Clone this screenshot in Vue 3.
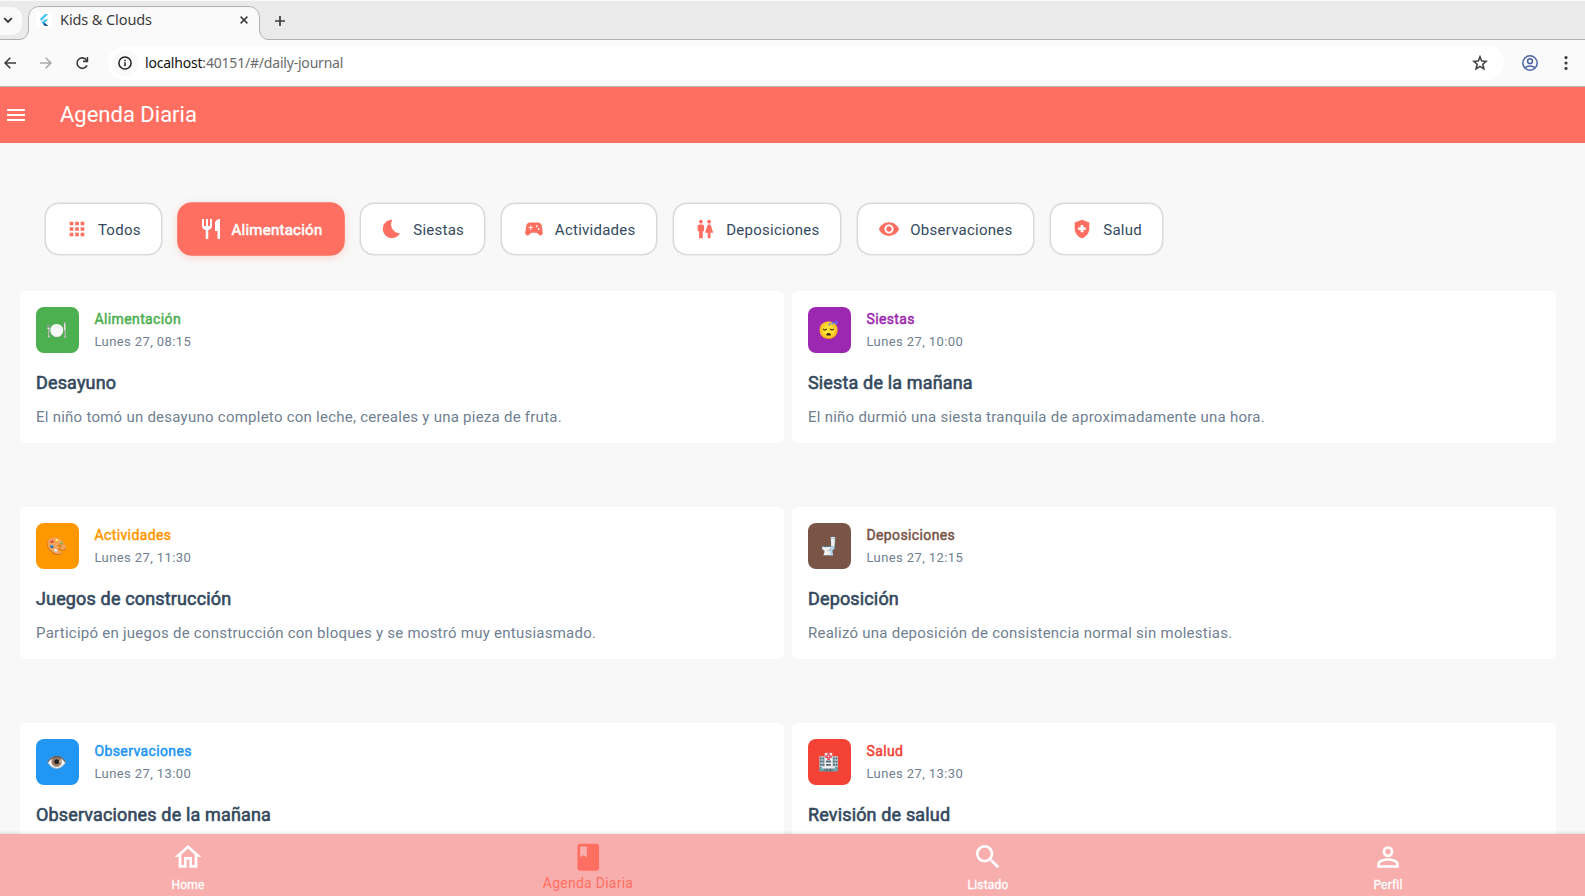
<script setup>
const chips = [
  { label: 'Todos', icon: 'M4 8h4V4H4v4zm6 12h4v-4h-4v4zm-6 0h4v-4H4v4zm0-6h4v-4H4v4zm6 0h4v-4h-4v4zm6-10v4h4V4h-4zm-6 4h4V4h-4v4zm6 6h4v-4h-4v4zm0 6h4v-4h-4v4z' },
  { label: 'Alimentación', active: true, icon: 'M11 9H9V2H7v7H5V2H3v7c0 2.12 1.66 3.84 3.75 3.97V22h2.5v-9.03C11.34 12.84 13 11.12 13 9V2h-2v7zm5-3v8h2.5v8H21V2c-2.76 0-5 2.24-5 4z' },
  { label: 'Siestas', icon: 'M12.34 2.02C6.59 1.82 2 6.42 2 12c0 5.52 4.48 10 10 10 3.71 0 6.93-2.02 8.66-5.02-7.51-.25-12.09-8.43-8.32-14.96z' },
  { label: 'Actividades', icon: 'M21.58 16.09l-1.09-7.66C20.21 6.46 18.52 5 16.53 5H7.47C5.48 5 3.79 6.46 3.51 8.43l-1.09 7.66C2.2 17.63 3.39 19 4.94 19c.68 0 1.32-.27 1.8-.75L9 16h6l2.25 2.25c.48.48 1.13.75 1.8.75 1.56 0 2.75-1.37 2.53-2.91zM11 11H9v2H8v-2H6v-1h2V8h1v2h2v1zm4-1c-.55 0-1-.45-1-1s.45-1 1-1 1 .45 1 1-.45 1-1 1zm2 3c-.55 0-1-.45-1-1s.45-1 1-1 1 .45 1 1-.45 1-1 1z' },
  { label: 'Deposiciones', icon: 'M5.5 22v-7.5H4V9c0-1.1.9-2 2-2h3c1.1 0 2 .9 2 2v5.5H9.5V22h-4zM18 22v-6h3l-2.54-7.63C18.18 7.55 17.42 7 16.56 7h-.12c-.86 0-1.63.55-1.9 1.37L12 16h3v6h3zM7.5 6c1.11 0 2-.89 2-2s-.89-2-2-2-2 .89-2 2 .89 2 2 2zm9 0c1.11 0 2-.89 2-2s-.89-2-2-2-2 .89-2 2 .89 2 2 2z' },
  { label: 'Observaciones', icon: 'M12 4.5C7 4.5 2.73 7.61 1 12c1.73 4.39 6 7.5 11 7.5s9.27-3.11 11-7.5c-1.73-4.39-6-7.5-11-7.5zM12 17c-2.76 0-5-2.24-5-5s2.24-5 5-5 5 2.24 5 5-2.24 5-5 5zm0-8c-1.66 0-3 1.34-3 3s1.34 3 3 3 3-1.34 3-3-1.34-3-3-3z' },
  { label: 'Salud', icon: 'M12 2L4 5v6.09c0 5.05 3.41 9.76 8 10.91 4.59-1.15 8-5.86 8-10.91V5l-8-3zM10.5 13H8v-3h2.5V7.5h3V10H16v3h-2.5v2.5h-3V13z' },
]

const entries = [
  { kind: 'food', emoji: '🍽️', category: 'Alimentación', date: 'Lunes 27, 08:15', title: 'Desayuno', text: 'El niño tomó un desayuno completo con leche, cereales y una pieza de fruta.' },
  { kind: 'nap', emoji: '😴', category: 'Siestas', date: 'Lunes 27, 10:00', title: 'Siesta de la mañana', text: 'El niño durmió una siesta tranquila de aproximadamente una hora.' },
  { kind: 'play', emoji: '🎨', category: 'Actividades', date: 'Lunes 27, 11:30', title: 'Juegos de construcción', text: 'Participó en juegos de construcción con bloques y se mostró muy entusiasmado.' },
  { kind: 'wc', emoji: '🚽', category: 'Deposiciones', date: 'Lunes 27, 12:15', title: 'Deposición', text: 'Realizó una deposición de consistencia normal sin molestias.' },
  { kind: 'watch', emoji: '👁️', category: 'Observaciones', date: 'Lunes 27, 13:00', title: 'Observaciones de la mañana', text: '' },
  { kind: 'health', emoji: '🏥', category: 'Salud', date: 'Lunes 27, 13:30', title: 'Revisión de salud', text: '' },
]

const tabs = [
  { label: 'Home', icon: 'M12 5.69l5 4.5V18h-2v-6H9v6H7v-7.81l5-4.5M12 3L2 12h3v8h6v-6h2v6h6v-8h3L12 3z' },
  { label: 'Agenda Diaria', active: true, icon: 'M18 2H6c-1.1 0-2 .9-2 2v16c0 1.1.9 2 2 2h12c1.1 0 2-.9 2-2V4c0-1.1-.9-2-2-2zM6 4h5v8l-2.5-1.5L6 12V4z' },
  { label: 'Listado', icon: 'M15.5 14h-.79l-.28-.27C15.41 12.59 16 11.11 16 9.5 16 5.91 13.09 3 9.5 3S3 5.91 3 9.5 5.91 16 9.5 16c1.61 0 3.09-.59 4.23-1.57l.27.28v.79l5 4.99L20.49 19l-4.99-5zm-6 0C7.01 14 5 11.99 5 9.5S7.01 5 9.5 5 14 7.01 14 9.5 11.99 14 9.5 14z' },
  { label: 'Perfil', icon: 'M12 5.9c1.16 0 2.1.94 2.1 2.1s-.94 2.1-2.1 2.1S9.9 9.16 9.9 8s.94-2.1 2.1-2.1m0 9c2.97 0 6.1 1.46 6.1 2.1v1.1H5.9V17c0-.64 3.13-2.1 6.1-2.1M12 4C9.79 4 8 5.79 8 8s1.79 4 4 4 4-1.79 4-4-1.79-4-4-4zm0 9c-2.67 0-8 1.34-8 4v3h16v-3c0-2.66-5.33-4-8-4z' },
]
</script>

<template>
  <div class="window">
    <div class="tabstrip">
      <div class="tab-search">
        <svg width="10" height="7" viewBox="0 0 10 7"><path d="M1.2 1.2 5 5l3.8-3.8" fill="none" stroke="#333" stroke-width="1.8" /></svg>
      </div>
      <svg class="tab-shape" width="252" height="35" viewBox="0 0 252 35">
        <path d="M0 34.5V33.5H1C7 33.500 10.500 29 10.500 23V12C10.500 5 15 .5 22 .5H230C237 .5 241.500 5 241.500 12V23C241.500 29 245 33.500 251 33.500H252V35H0Z" fill="#fafafa" />
        <path d="M0 33.500H1C7 33.500 10.500 29 10.500 23V12C10.500 5 15 .5 22 .5H230C237 .5 241.500 5 241.500 12V23C241.500 29 245 33.500 251 33.500H252" fill="none" stroke="#b0b0b0" />
      </svg>
      <div class="tab">
        <span class="favicon">
          <svg width="16" height="16" viewBox="0 0 16 16">
            <path d="M9 2h3.200L5.400 8.900 3.800 7.200Z" fill="#47c5fb" />
            <path d="M9 7.300h3.200L8.800 10.700 7.200 9.100Z" fill="#47c5fb" />
            <path d="M5.600 10.600 7.200 9l1.700 1.700-1.700 1.600Z" fill="#27a9e8" />
            <path d="M7.200 12.300 8.800 10.700 12.200 14H9Z" fill="#0b4f95" />
          </svg>
        </span>
        <span class="tab-title">Kids &amp; Clouds</span>
        <svg class="tab-close" width="8" height="8" viewBox="0 0 8 8"><path d="M.6.600 7.400 7.400M7.400.600.6 7.400" stroke="#3c3c3c" stroke-width="1.500" /></svg>
      </div>
      <svg class="tab-new" width="10" height="10" viewBox="0 0 10 10"><path d="M5 0V10M0 5H10" stroke="#3c3c3c" stroke-width="1.700" /></svg>
    </div>

    <div class="toolbar">
      <svg class="back" width="12" height="12" viewBox="0 0 12 12"><path d="M12 6H1.200M6.300.800 1.100 6l5.200 5.200" fill="none" stroke="#3c3c3c" stroke-width="1.600" /></svg>
      <svg class="forward" width="12" height="12" viewBox="0 0 12 12"><path d="M0 6H10.800M5.700.800 10.900 6l-5.200 5.200" fill="none" stroke="#aaa" stroke-width="1.600" /></svg>
      <svg class="reload" width="14" height="14" viewBox="0 0 14 14"><path d="M12 9.200A5.200 5.200 0 1 1 11.400 4L12.400 5.200" fill="none" stroke="#3c3c3c" stroke-width="1.600" /><path d="M12.400 1V5.400H8" fill="none" stroke="#3c3c3c" stroke-width="1.600" /></svg>
      <div class="omnibox">
        <span class="site-info">
          <svg width="14" height="14" viewBox="0 0 14 14"><circle cx="7" cy="7" r="6.100" fill="none" stroke="#222" stroke-width="1.500" /><path d="M7 6.200V10.200M7 3.700V5.200" stroke="#222" stroke-width="1.500" /></svg>
        </span>
        <span class="url"><b>localhost</b>:40151/#/daily-journal</span>
        <svg class="star" width="16" height="16" viewBox="0 0 16 16"><path d="M8 1.700 9.700 6l4.600.3-3.500 3 1.100 4.500L8 11.300l-3.900 2.500 1.100-4.500-3.500-3L6.300 6Z" fill="none" stroke="#3c3c3c" stroke-width="1.500" /></svg>
      </div>
      <svg class="account" width="16" height="16" viewBox="0 0 16 16"><g fill="none" stroke="#4a63a8" stroke-width="1.500"><circle cx="8" cy="8" r="7.200" /><circle cx="8" cy="6.200" r="2.400" /><path d="M3 12.800C5.500 10.300 10.500 10.300 13 12.800" /></g></svg>
      <svg class="kebab" width="4" height="14" viewBox="0 0 4 14"><g fill="#3c3c3c"><circle cx="2" cy="1.600" r="1.550" /><circle cx="2" cy="7" r="1.550" /><circle cx="2" cy="12.400" r="1.550" /></g></svg>
    </div>

    <header class="appbar">
      <svg width="24" height="24" viewBox="0 0 24 24"><path d="M3 18h18v-2H3v2zm0-5h18v-2H3v2zm0-7v2h18V6H3z" fill="#fff" /></svg>
      <h1>Agenda Diaria</h1>
    </header>

    <main class="content">
      <div class="chips">
        <button v-for="chip in chips" :key="chip.label" class="chip" :class="{ active: chip.active }">
          <svg viewBox="0 0 24 24"><path :d="chip.icon" fill="currentColor" fill-rule="evenodd" /></svg>
          <span>{{ chip.label }}</span>
        </button>
      </div>
      <div class="grid">
        <article v-for="entry in entries" :key="entry.title" class="card" :class="entry.kind">
          <div class="head">
            <div class="badge">{{ entry.emoji }}</div>
            <div>
              <div class="category">{{ entry.category }}</div>
              <div class="date">{{ entry.date }}</div>
            </div>
          </div>
          <h2>{{ entry.title }}</h2>
          <p>{{ entry.text }}</p>
        </article>
      </div>
    </main>

    <nav class="bottom">
      <div v-for="tab in tabs" :key="tab.label" class="item" :class="{ active: tab.active }">
        <svg viewBox="0 0 24 24"><path :d="tab.icon" fill="currentColor" fill-rule="evenodd" /></svg>
        <span>{{ tab.label }}</span>
      </div>
    </nav>
  </div>
</template>

<style>
body { margin: 0; overflow: hidden; }
</style>

<style scoped>
* { box-sizing: border-box; }
.window { width: 1585px; height: 896px; display: flex; flex-direction: column; overflow: hidden; background: #f8f8f8; font-family: Roboto, "Liberation Sans", "Noto Color Emoji", sans-serif; }
svg { display: block; flex: none; }

.tabstrip { position: relative; height: 40px; flex: none; display: flex; align-items: center; background: #eaeaea; border-top: 1px solid #fafafa; border-bottom: 1px solid #b0b0b0; }
.tab-search { width: 22px; height: 28px; margin-top: 1px; border-radius: 0 10px 10px 0; background: #fafafa; display: flex; align-items: center; padding-left: 3px; }
.tab-shape { position: absolute; left: 18px; top: 5px; }
.tab { position: relative; width: 232px; height: 28px; margin-left: 6px; display: flex; align-items: center; padding-left: 8px; }
.favicon { width: 16px; height: 16px; background: #fff; }
.tab-title { width: 180px; margin-left: 8px; padding-bottom: 2px; font: 14.5px "Noto Sans", sans-serif; color: #3c3c3c; letter-spacing: -0.1px; white-space: nowrap; }
.tab-new { margin-left: 15px; margin-top: 1px; }

.toolbar { height: 47px; flex: none; display: flex; align-items: center; background: #fafafa; border-bottom: 1px solid #b8b8b8; }
.back { margin-left: 4px; }
.forward { margin-left: 24px; }
.reload { margin-left: 23px; }
.omnibox { width: 1396px; height: 34px; margin-left: 19px; border-radius: 17px; background: #fff; display: flex; align-items: center; padding-left: 4px; }
.site-info { width: 26px; height: 26px; border-radius: 50%; background: #fafafa; display: flex; align-items: center; justify-content: center; }
.url { flex: 1; margin-left: 7px; padding-bottom: 2px; font: 14px "Noto Sans", sans-serif; letter-spacing: -0.2px; color: #6b6b6b; white-space: nowrap; }
.url b { font-weight: 400; color: #111; }
.star { margin-right: 16px; }
.account { margin-left: 18px; }
.kebab { margin-left: 26px; }

.appbar { height: 56px; flex: none; display: flex; align-items: center; padding-left: 4px; background: #ff6f61; color: #fff; }
.appbar h1 { margin: 0 0 0 32px; font-size: 22px; font-weight: 400; line-height: 28px; }

.content { flex: 1; min-height: 0; overflow: hidden; padding: 60px 29px 0 20px; }
.chips { display: flex; gap: 16px; margin-left: 24.500px; height: 52px; }
.chip { display: flex; align-items: center; gap: 10px; height: 52px; padding: 0 20.400px; border: 1px solid #d9d9d9; border-radius: 14px; background: #fff; color: #ff6f61; box-shadow: 0 0 0 0.500px #d9d9d9; font: 15px Roboto, sans-serif; letter-spacing: 0.25px; white-space: nowrap; }
.chip svg { width: 22px; height: 22px; }
.chip span { padding-top: 2px; color: #34495e; }
.chip.active { gap: 8px; background: #ff6f61; border-color: #ff6f61; color: #fff; box-shadow: 0 0 0 0.800px #ff6f61, 0 2px 8px rgba(255, 111, 97, 0.3); letter-spacing: 0.26px; }
.chip.active svg { width: 24px; height: 24px; }
.chip.active span { color: #fff; -webkit-text-stroke: 0.6px #fff; }

.grid { display: grid; grid-template-columns: 764px 764px; gap: 64px 8px; margin-top: 36px; }
.card { height: 152px; padding: 16px; border-radius: 5px; background: #fff; }
.head { display: flex; gap: 15.700px; height: 46px; }
.badge { width: 42.800px; height: 46px; border-radius: 8px; background: var(--tone); display: flex; align-items: center; justify-content: center; padding-bottom: 1px; font: 17px "Noto Color Emoji", sans-serif; }
.category { margin-top: 2px; color: var(--tone); font-size: 14px; line-height: 20px; letter-spacing: 0.38px; -webkit-text-stroke: 0.5px var(--tone); }
.date { margin-top: 3px; color: #708090; font-size: 13px; line-height: 20px; letter-spacing: 0.4px; }
.card h2 { margin: 17px 0 0; font-size: 18px; font-weight: 400; line-height: 26px; letter-spacing: 0.15px; color: #34495e; -webkit-text-stroke: 0.6px #34495e; }
.card p { margin: 10px 0 0; font-size: 15px; line-height: 22px; letter-spacing: 0.25px; color: #708090; white-space: nowrap; }
.food { --tone: #4caf50; }
.nap { --tone: #9c27b0; }
.play { --tone: #ff9800; }
.wc { --tone: #795548; }
.watch { --tone: #2196f3; }
.health { --tone: #f44336; }

.bottom { height: 62px; flex: none; display: grid; grid-template-columns: repeat(4, 400px); margin-left: -12px; width: 1600px; background: #f9aeae; box-shadow: 0 -1px 3px rgba(0, 0, 0, 0.12); position: relative; }
.item { display: flex; flex-direction: column; align-items: center; padding-top: 7px; color: #fff; font-size: 12px; line-height: 16px; letter-spacing: 0.2px; }
.item svg { width: 32px; height: 32px; }
.item span { margin-top: 4px; -webkit-text-stroke: 0.3px currentColor; }
.item.active { color: #ff6f61; font-size: 14px; letter-spacing: 0.25px; }
.item.active svg { width: 32.500px; height: 32.500px; }
.item.active span { margin-top: 1.500px; -webkit-text-stroke: 0; }
</style>
